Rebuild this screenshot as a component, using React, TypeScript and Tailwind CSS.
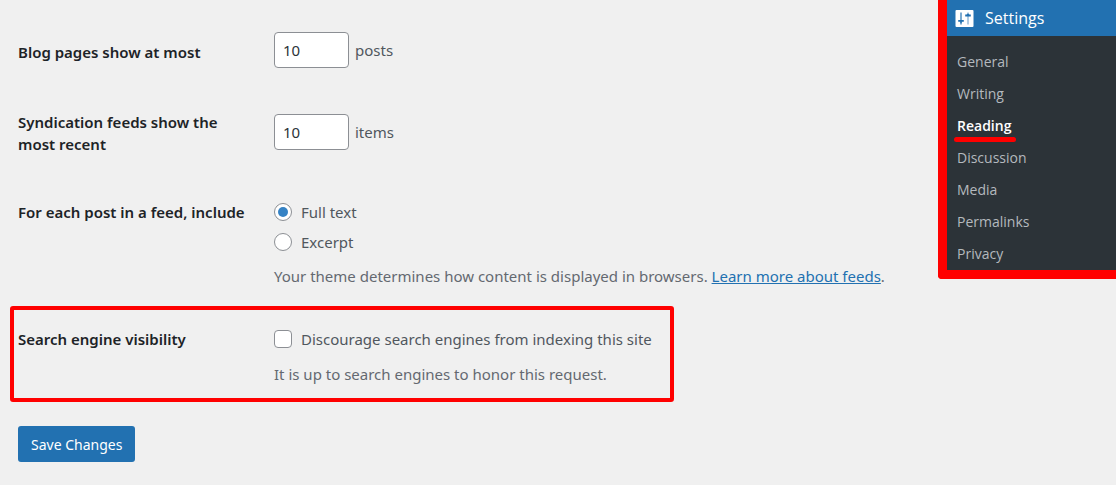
import type { ReactNode } from "react";

const MENU_ITEMS = ["General", "Writing", "Reading", "Discussion", "Media", "Permalinks", "Privacy"];
const CURRENT_ITEM = "Reading";

const ROW = "grid grid-cols-[256px_1fr] items-start";
const LABEL = "pr-4 font-semibold leading-[22px] text-[#1d2327]";
const CHOICE = "flex items-center gap-[9px] leading-[22px]";
const NUMBER_INPUT =
  "h-9 w-[75px] rounded border border-[#8c8f94] bg-white px-2 text-[#2c3338] outline-none focus:border-[#2271b1]";

function SettingsIcon() {
  return (
    <svg viewBox="0 0 19 17" className="h-[17px] w-[19px] flex-none" aria-hidden="true">
      <rect x="0.500" width="18" height="17" rx="1" fill="#fff" />
      <path d="M6 2.500v12" stroke="#2271b1" strokeWidth="1.200" />
      <path d="M13 2.500v12" stroke="#2271b1" strokeWidth="1" strokeOpacity="0.700" />
      <path d="M3.200 10.800h5.600M10.200 5.500h5.600" stroke="#2271b1" strokeWidth="1.800" />
      <path d="M4.500 11.500h3L6 13.200zM11.500 5h3L13 3.300z" fill="#2271b1" />
    </svg>
  );
}

function Radio({ id, checked, children }: { id: string; checked?: boolean; children: ReactNode }) {
  return (
    <div className={CHOICE}>
      <input
        type="radio"
        name="rss_use_excerpt"
        id={id}
        defaultChecked={checked}
        className="grid size-[18px] flex-none appearance-none place-items-center rounded-full border border-[#8c8f94] bg-white before:size-[10px] before:rounded-full checked:before:bg-[#3582c4]"
      />
      <label htmlFor={id}>{children}</label>
    </div>
  );
}

function SettingsMenu() {
  return (
    <aside className="w-[178px] flex-none self-start rounded-bl border-b-[9px] border-l-[9px] border-[#ff0000] bg-[#2c3338] font-['Open_Sans',sans-serif]">
      <a href="#settings" className="flex h-9 items-center gap-[11px] bg-[#2271b1] pl-2 text-[16px] text-white">
        <SettingsIcon />
        Settings
      </a>
      <ul className="pt-[10px] text-[14px]">
        {MENU_ITEMS.map((item) => (
          <li key={item}>
            {item === CURRENT_ITEM ? (
              <a href={`#${item}`} aria-current="page" className="relative block pl-[10px] font-semibold leading-8 text-white">
                {item}
                <span className="absolute bottom-0 left-[7px] h-[5px] w-[62px] rounded-full bg-[#ff0000]" />
              </a>
            ) : (
              <a href={`#${item}`} className="block pl-[10px] leading-8 text-[#b4b9be] hover:text-[#72aee6]">
                {item}
              </a>
            )}
          </li>
        ))}
      </ul>
    </aside>
  );
}

export default function App() {
  return (
    <div className="flex min-h-screen bg-[#f0f0f0] font-['Noto_Sans','Open_Sans',sans-serif] text-[15px] text-[#50575e]">
      <main className="min-w-0 flex-1 pb-6 pt-8">
        <form onSubmit={(e) => e.preventDefault()}>
          <div className={`${ROW} pl-[18px]`}>
            <label htmlFor="posts_per_page" className={`${LABEL} pt-[9px]`}>Blog pages show at most</label>
            <div className="flex items-center gap-[6px]">
              <input id="posts_per_page" inputMode="numeric" defaultValue="10" className={NUMBER_INPUT} />
              posts
            </div>
          </div>

          <div className={`${ROW} pl-[18px] pt-[43px]`}>
            <label htmlFor="posts_per_rss" className={LABEL}>Syndication feeds show the most recent</label>
            <div className="flex items-center gap-[6px] pt-[3px]">
              <input id="posts_per_rss" inputMode="numeric" defaultValue="10" className={NUMBER_INPUT} />
              items
            </div>
          </div>

          <div role="radiogroup" aria-labelledby="feed-label" className={`${ROW} pl-[18px] pt-[46px]`}>
            <span id="feed-label" className={LABEL}>For each post in a feed, include</span>
            <div>
              <div className="flex flex-col gap-2">
                <Radio id="full-text" checked>Full text</Radio>
                <Radio id="excerpt">Excerpt</Radio>
              </div>
              <p className="pt-3 leading-[22px] text-[#646970]">
                Your theme determines how content is displayed in browsers.{" "}
                <a href="#feeds" className="text-[#2271b1] underline">Learn more about feeds</a>.
              </p>
            </div>
          </div>

          <div className={`${ROW} ml-[10px] mt-[19px] max-w-[664px] rounded-[3px] border-4 border-[#ff0000] pb-[13px] pl-1 pt-[18px]`}>
            <label htmlFor="blog_public" className={LABEL}>Search engine visibility</label>
            <div>
              <div className={CHOICE}>
                <input
                  type="checkbox"
                  id="blog_public"
                  className="size-[18px] flex-none appearance-none rounded border border-[#8c8f94] bg-white checked:bg-[#3582c4]"
                />
                <label htmlFor="blog_public">Discourage search engines from indexing this site</label>
              </div>
              <p className="pt-[13px] leading-[22px] text-[#646970]">It is up to search engines to honor this request.</p>
            </div>
          </div>

          <button type="submit" className="ml-[18px] mt-6 h-9 rounded-[3px] bg-[#2271b1] px-[13px] text-[14px] text-white hover:bg-[#135e96]">
            Save Changes
          </button>
        </form>
      </main>
      <SettingsMenu />
    </div>
  );
}
